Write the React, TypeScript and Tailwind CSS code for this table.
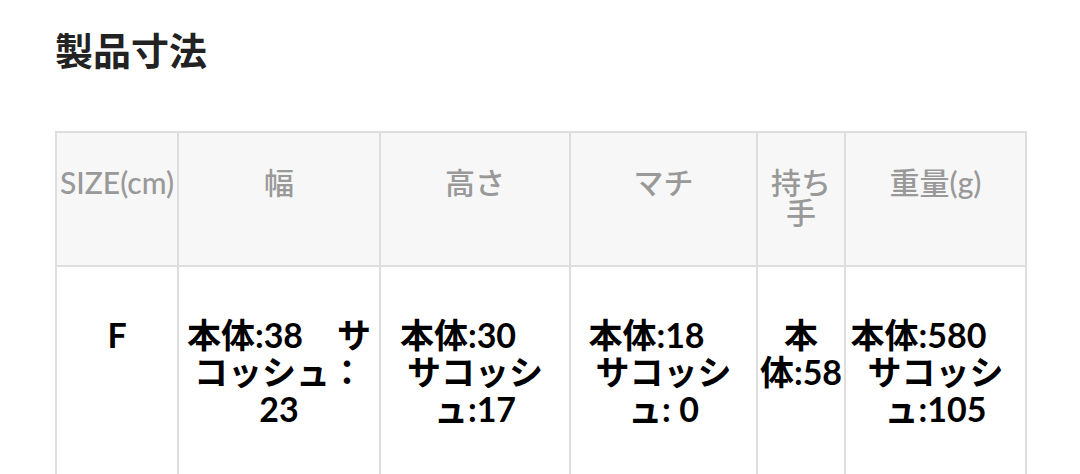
import React from 'react';

const cols = [
  { label: ['SIZE(cm)'], w: 'w-[122px]' },
  { label: ['幅'], w: 'w-[202px]' },
  { label: ['高さ'], w: 'w-[190px]' },
  { label: ['マチ'], w: 'w-[187px]' },
  { label: ['持ち', '手'], w: 'w-[88px]' },
  { label: ['重量(g)'], w: 'w-[181px]' },
];

const values: string[][] = [
  ['F'],
  ['本体:38\u3000サ', 'コッシュ：', '23'],
  ['本体:30\u3000', 'サコッシ', 'ュ:17'],
  ['本体:18\u3000', 'サコッシ', 'ュ: 0'],
  ['本', '体:58'],
  ['本体:580\u3000', 'サコッシ', 'ュ:105'],
];

const App: React.FC = () => {
  return (
    <div
      className="w-[1080px] h-[474px] overflow-hidden bg-white pl-[55px]"
      style={{ fontFamily: 'Lato, "Noto Sans CJK JP", sans-serif' }}
    >
      <h1 className="pt-[28px] h-[131px] text-[38px] leading-[44px] font-bold text-[#222]">製品寸法</h1>

      <table className="table-fixed border-collapse w-[971px]">
        <thead>
          <tr className="h-[134px]">
            {cols.map((c, i) => (
              <th
                key={i}
                className={`${c.w} border-2 border-[#dedede] bg-[#f7f7f7] align-top pt-[34px] px-0 text-center text-[30px] leading-[30px] font-medium text-[#999] whitespace-pre`}
              >
                {c.label.map((l, j) => (
                  <span key={j} className="block">{l}</span>
                ))}
              </th>
            ))}
          </tr>
        </thead>
        <tbody>
          <tr className="h-[240px]">
            {values.map((v, i) => (
              <td
                key={i}
                className="border-2 border-[#dedede] align-top pt-[49px] px-0 text-center text-[34px] leading-[37px] font-bold text-black whitespace-pre"
              >
                {v.map((l, j) => (
                  <span key={j} className="block">{l}</span>
                ))}
              </td>
            ))}
          </tr>
        </tbody>
      </table>
    </div>
  );
};

export default App;
